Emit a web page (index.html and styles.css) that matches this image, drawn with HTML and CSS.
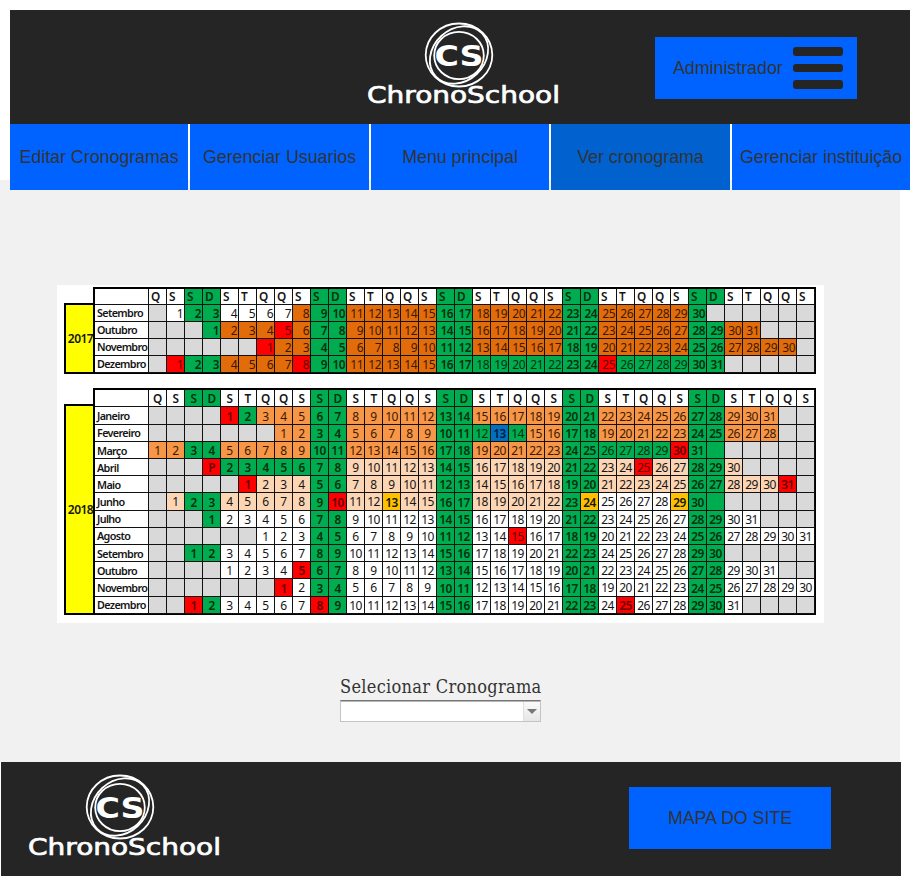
FILE: index.html
```html
<!DOCTYPE html>
<html lang="pt-BR">
<head>
<meta charset="utf-8">
<title>ChronoSchool</title>
<link rel="stylesheet" href="styles.css">
</head>
<body>
<header class="bar top">
  <svg class="logo" width="200" height="92" viewBox="0 0 200 92">
    <g class="rings">
      <ellipse cx="93" cy="33" rx="33.3" ry="31.5"/>
      <ellipse cx="93" cy="33" rx="31.6" ry="26" transform="rotate(-43 93 33)"/>
      <ellipse cx="93" cy="33.5" rx="24.8" ry="23.7"/>
    </g>
    <text class="mono" x="68.5" y="43.5" textLength="49" lengthAdjust="spacingAndGlyphs">CS</text>
    <text class="word" x="1" y="81" textLength="193" lengthAdjust="spacingAndGlyphs">ChronoSchool</text>
  </svg>
  <button class="box admin"><span>Administrador</span><span class="burger"><i></i><i></i><i></i></span></button>
</header>
<nav class="menu">
  <a>Editar Cronogramas</a>
  <a>Gerenciar Usuarios</a>
  <a>Menu principal</a>
  <a class="current">Ver cronograma</a>
  <a>Gerenciar instituição</a>
</nav>
<main>
  <section class="sheet" id="sheet"></section>
  <div class="picker">
    <label for="cron">Selecionar Cronograma</label>
    <div class="combo">
      <input id="cron" type="text">
      <span class="drop"><svg width="10" height="5" viewBox="0 0 10 5"><path d="M0 0h10L5 5z"/></svg></span>
    </div>
  </div>
</main>
<footer class="bar bottom">
  <svg class="logo" width="200" height="92" viewBox="0 0 200 92">
    <g class="rings">
      <ellipse cx="93" cy="33" rx="33.3" ry="31.5"/>
      <ellipse cx="93" cy="33" rx="31.6" ry="26" transform="rotate(-43 93 33)"/>
      <ellipse cx="93" cy="33.5" rx="24.8" ry="23.7"/>
    </g>
    <text class="mono" x="68.5" y="43.5" textLength="49" lengthAdjust="spacingAndGlyphs">CS</text>
    <text class="word" x="1" y="81" textLength="193" lengthAdjust="spacingAndGlyphs">ChronoSchool</text>
  </svg>
  <button class="box map">MAPA DO SITE</button>
</footer>
<script src="calendar.js"></script>
</body>
</html>
```
FILE: styles.css
```css
* { box-sizing: border-box; }
body {
  margin: 0;
  padding-top: 10px;
  width: 910px;
  height: 876px;
  overflow: hidden;
  background: #fff;
  font-family: "Liberation Sans", Arial, sans-serif;
  font-size: 17.8px;
  color: #333;
}
.bar { display: flex; align-items: flex-start; width: 900px; height: 114px; background: #252525; }
.top { margin-left: 10px; padding: 12px 0 0 356px; }
.bottom { margin-left: 1px; padding: 12px 0 0 26px; }
.logo { display: block; flex: none; fill: #fff; font-family: "DejaVu Sans", sans-serif; overflow: visible; }
.rings { fill: none; stroke: #fff; stroke-width: 1.8; }
.mono { font-size: 29px; font-weight: bold; }
.word { font-size: 23px; stroke: #fff; stroke-width: .7; }
.box {
  display: flex;
  align-items: center;
  width: 202px;
  height: 62px;
  border: 0;
  padding: 0;
  background: #0063ff;
  color: #333;
  font: inherit;
}
.admin { margin: 15px 0 0 89px; padding: 0 14px 0 18px; justify-content: space-between; }
.map { margin: 13px 0 0 402px; justify-content: center; }
.burger { display: flex; flex-direction: column; justify-content: space-between; width: 50px; height: 42px; }
.burger i { height: 9px; border-radius: 3px; background: #252525; }
.burger i:nth-child(2) { height: 8px; }
.menu {
  position: relative;
  z-index: 1;
  display: flex;
  gap: 2.4px;
  width: 900px;
  height: 66px;
  margin-left: 10px;
  background: linear-gradient(#fff 56px, #f1f1f1 56px);
}
.menu a { flex: 1 1 0; min-width: 0; display: flex; align-items: center; justify-content: center; white-space: nowrap; background: #0063ff; }
.menu .current { background: #0061cf; }
main { width: 900px; height: 582px; margin-top: -10px; padding: 105px 0 0 57px; background: #f1f1f1; }
.sheet {
  width: 767px;
  height: 338px;
  padding: 2px 0 0 7px;
  background: #fff;
  font-family: "Noto Sans", "Open Sans", sans-serif;
  font-size: 12px;
  letter-spacing: -.5px;
  color: #151515;
}
.year { display: grid; grid-template-columns: 29px 723px; width: 752px; }
.year + .year { margin-top: 14.4px; }
.tag {
  display: flex;
  align-items: center;
  justify-content: center;
  margin-top: 16px;
  border: 2px solid #000;
  border-right: 0;
  background: #ff0;
  font-weight: 600;
  padding-left: 2px;
}
.days { display: grid; grid-template-columns: 54px repeat(37, 1fr); grid-template-rows: 17px; grid-auto-rows: 17.2px; border: 2px solid #000; border-right-width: 1px; border-bottom-width: 1px; }
.y2017 .days { grid-template-rows: 16.3px; grid-auto-rows: 16.95px; }
.days span {
  display: flex;
  align-items: center;
  justify-content: center;
  border-right: 1px solid #111;
  border-bottom: 1px solid #111;
  line-height: 1;
  min-width: 0;
  padding-top: 1px;
}
.y2018 .num, .y2018 .month { padding-top: 2px; }
.days .month { justify-content: flex-start; padding-left: 2px; font-weight: 600; font-size: 10.8px; letter-spacing: -.65px; white-space: nowrap; }
.y2017 .num { justify-content: flex-end; padding-right: 1px; }
.y2017 .head { justify-content: flex-start; padding-left: 2px; }
.days .head { font-weight: 600; font-size: 11.8px; }
.none { background: #d9d9d9; }
.green { background: #00ac50; color: #06300f; }
.orange { background: #e36c0a; color: #3a1a04; }
.light { background: #f79646; color: #3a1a04; }
.peach { background: #fcd5b4; }
.red { background: #fe0000; color: #640000; }
.blue { background: #0070c0; color: #001c38; }
.amber { background: #ffc000; }
.strong { font-weight: 600; font-size: 11.8px; letter-spacing: -.55px; }
.picker { width: 201px; margin: 52px 0 0 283px; }
.picker label {
  display: block;
  height: 25px;
  line-height: 24px;
  font-family: "DejaVu Serif Condensed", "DejaVu Serif", serif;
  font-stretch: condensed;
  font-size: 18px;
  letter-spacing: .3px;
  white-space: nowrap;
}
.combo { display: flex; height: 22px; border: 1px solid #c4c4c4; border-top: 1px solid #777; background: #fff; box-shadow: inset 0 1px #b5b5b5; }
.combo input { flex: 1; min-width: 0; border: 0; padding: 0; background: none; }
.drop { display: flex; align-items: center; justify-content: center; width: 17px; margin-top: 1px; background: linear-gradient(#fafafa, #e6e6e6); border-left: 1px solid #e0e0e0; fill: #777; }
```
FILE: calendar.js
```js
// Month: [name, column of day 1, length, default colour, {day or range: colour}]
// A trailing "!" makes the day bold.
const years = {
  2017: [
    ["Setembro", 1, 30, "orange", { "1-7": "white" }],
    ["Outubro", 3, 31, "orange", { "5": "red" }],
    ["Novembro", 6, 30, "orange", { "1": "red" }],
    ["Dezembro", 1, 31, "orange", { "1": "red", "8": "red", "18-29": "green", "25": "red" }]
  ],
  2018: [
    ["Janeiro", 4, 31, "light", { "1": "red!", "2": "green!" }],
    ["Fevereiro", 7, 28, "light", { "12": "green", "13": "blue!", "14": "green" }],
    ["Março", 0, 31, "light", { "26-29": "green", "30": "red!" }, true],
    ["Abril", 3, 30, "peach", { "1": "red!", "2-6": "green!", "25": "red" }],
    ["Maio", 5, 31, "peach", { "1": "red!", "31": "red!" }],
    ["Junho", 1, 30, "peach", { "10": "red!", "13": "amber!", "24": "amber!", "25-28": "white", "29": "amber!" }, true],
    ["Julho", 3, 31, "white", {}],
    ["Agosto", 6, 31, "white", { "15": "red" }],
    ["Setembro", 2, 30, "white", {}],
    ["Outubro", 4, 31, "white", { "5": "red!" }],
    ["Novembro", 7, 30, "white", { "1": "red!" }],
    ["Dezembro", 2, 31, "white", { "1": "red!", "8": "red!", "25": "red!" }]
  ]
};
const weekend = c => c % 7 === 2 || c % 7 === 3;
const cell = (cls, text) => `<span class="${cls}">${text}</span>`;

function dayCell(col, month) {
  const [name, start, length, base, marks, greenTail] = month;
  const day = col - start + 1;
  if (day < 1 || day > length) {
    return cell(greenTail && col === 31 ? "green" : "none", "");
  }
  let colour = base;
  for (const key of Object.keys(marks)) {
    const [from, to = from] = key.split("-").map(Number);
    if (from !== to && day >= from && day <= to) colour = marks[key];
  }
  if (weekend(col)) colour = "green!";
  if (marks[day]) colour = marks[day];
  const cls = "num " + colour.replace("!", " strong");
  return cell(cls, name === "Abril" && day === 1 ? "P" : day);
}

document.getElementById("sheet").innerHTML = Object.entries(years).map(([year, months]) => {
  let html = cell("month", "");
  for (let c = 0; c < 37; c++) {
    html += cell("head" + (weekend(c) ? " green" : ""), "QSSDSTQ"[c % 7]);
  }
  for (const month of months) {
    html += cell("month", month[0]);
    for (let c = 0; c < 37; c++) html += dayCell(c, month);
  }
  return `<div class="year y${year}"><div class="tag">${year}</div><div class="days">${html}</div></div>`;
}).join("");
```
